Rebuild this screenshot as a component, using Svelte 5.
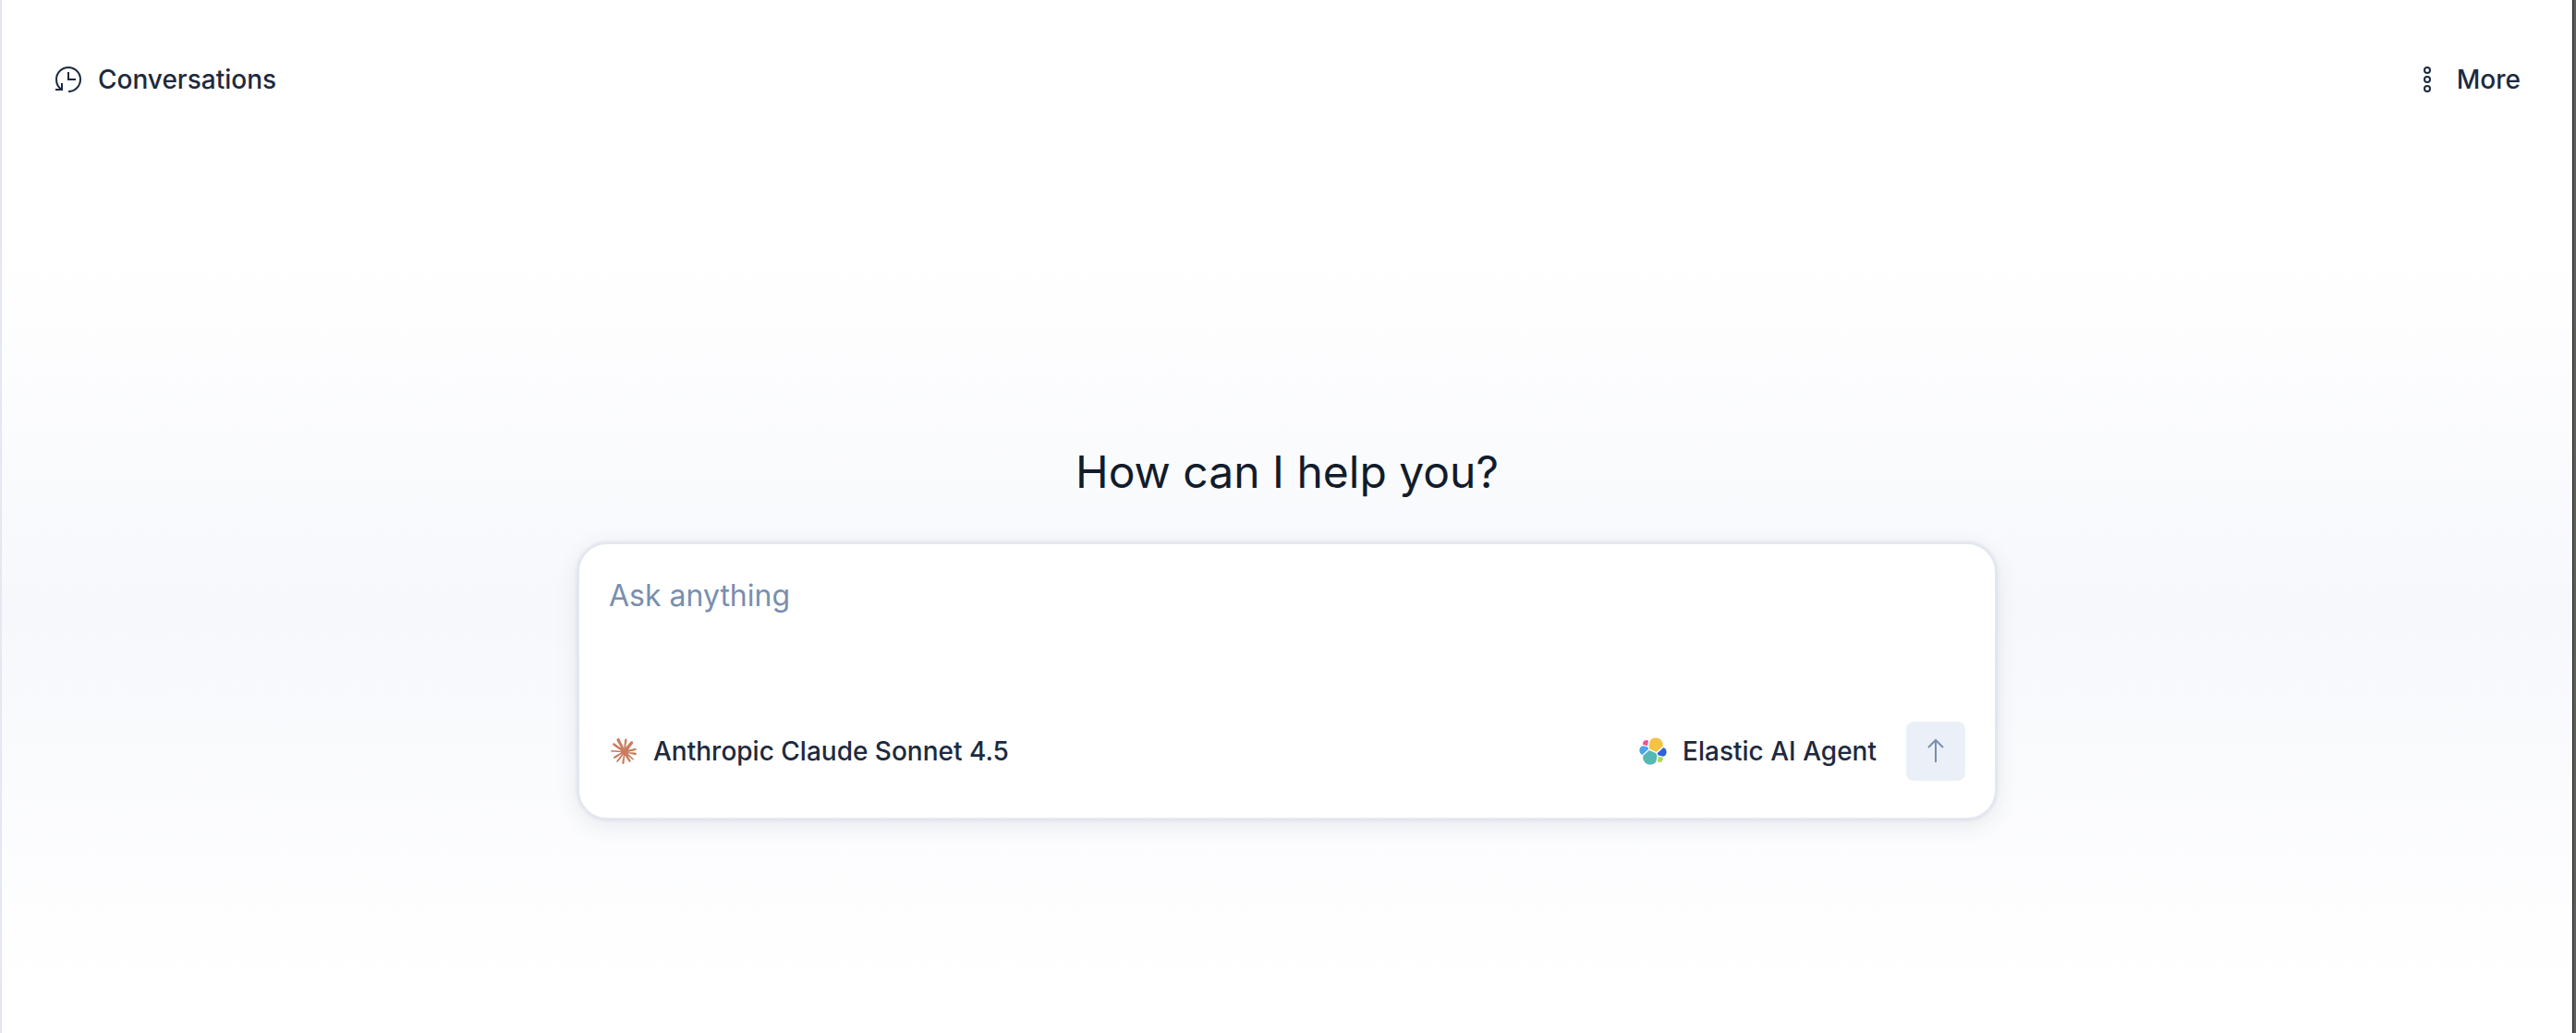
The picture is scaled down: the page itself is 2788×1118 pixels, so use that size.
<script>
	let message = '';

	$: canSend = message.trim().length > 0;

	function send() {
		message = '';
	}
</script>

<div class="page">
	<header>
		<button type="button" class="text-btn">
			<svg class="icon" viewBox="0 0 32 32" fill="none" stroke="currentColor" stroke-width="2">
				<path d="M16 29a13 13 0 1 0-13-13c0 4.600 2 8.400 5.500 10.800" />
				<path d="M2 27h7v-7M16 8v8h8" />
			</svg>
			Conversations
		</button>
		<button type="button" class="text-btn">
			<svg class="icon" viewBox="0 0 32 32" fill="none" stroke="currentColor" stroke-width="2">
				<circle cx="16" cy="6" r="3" />
				<circle cx="16" cy="16" r="3" />
				<circle cx="16" cy="26" r="3" />
			</svg>
			More
		</button>
	</header>

	<main>
		<h1>How can I help you?</h1>
		<form class="card" on:submit|preventDefault="{send}">
			<textarea aria-label="Message" placeholder="Ask anything" bind:value="{message}"></textarea>
			<div class="actions">
				<button type="button" class="text-btn">
					<svg class="icon claude" viewBox="0 0 24 24">
						<path d="m4.7144 15.9555 4.7174-2.6471.079-.2307-.079-.1275h-.2307l-.7893-.0486-2.6956-.0729-2.3375-.0971-2.2646-.1214-.5707-.1215-.5343-.7042.0546-.3522.4797-.3218.686.0608 1.5179.1032 2.2767.1578 1.6514.0972 2.4468.255h.3886l.0546-.1579-.1336-.0971-.1032-.0972L6.973 9.8356l-2.55-1.6879-1.3356-.9714-.7225-.4918-.3643-.4614-.1578-1.0078.6557-.7225.8803.0607.2246.0607.8925.686 1.9064 1.4754 2.4893 1.8336.3643.3035.1457-.1032.0182-.0728-.164-.2733-1.3539-2.4467-1.445-2.4893-.6435-1.032-.17-.6194c-.0607-.255-.1032-.4674-.1032-.7285L6.287.1335 6.6997 0l.9957.1336.419.3642.6192 1.4147 1.0018 2.2282 1.5543 3.0296.4553.8985.2429.8318.091.255h.1579v-.1457l.1275-1.706.2368-2.0947.2307-2.6957.0789-.7589.3764-.9107.7468-.4918.5828.2793.4797.686-.0668.4433-.2853 1.8517-.5586 2.9021-.3643 1.9429h.2125l.2429-.2429.9835-1.3053 1.6514-2.0643.7286-.8196.85-.9046.5464-.4311h1.0321l.759 1.1293-.34 1.1657-1.0625 1.3478-.8804 1.1414-1.2628 1.7-.7893 1.36.0729.1093.1882-.0183 2.8535-.607 1.5421-.2794 1.8396-.3157.8318.3886.091.3946-.3278.8075-1.967.4857-2.3072.4614-3.4364.8136-.0425.0304.0486.0607 1.5482.1457.6618.0364h1.621l3.0175.2247.7892.522.4736.6376-.079.4857-1.2142.6193-1.6393-.3886-3.825-.9107-1.3113-.3279h-.1822v.1093l1.0929 1.0686 2.0035 1.8092 2.5075 2.3314.1275.5768-.3218.4554-.34-.0486-2.2039-1.6575-.85-.7468-1.9246-1.621h-.1275v.17l.4432.6496 2.3436 3.5214.1214 1.0807-.17.3521-.6071.2125-.6679-.1214-1.3721-1.9246L14.38 17.959l-1.1414-1.9428-.1397.079-.674 7.2552-.3156.3703-.7286.2793-.6071-.4614-.3218-.7468.3218-1.4753.3886-1.9246.3157-1.53.2853-1.9004.17-.6314-.0121-.0425-.1397.0182-1.4328 1.9672-2.1796 2.9446-1.7243 1.8456-.4128.164-.7164-.3704.0667-.6618.4008-.5889 2.386-3.0357 1.4389-1.882.929-1.0868-.0062-.1579h-.0546l-6.3385 4.1164-1.1293.1457-.4857-.4554.0608-.7467.2307-.2429 1.9064-1.3114Z" />
					</svg>
					Anthropic Claude Sonnet 4.5
				</button>
				<div class="right">
					<button type="button" class="text-btn">
						<svg class="icon" viewBox="0 0 32 32">
							<path fill="#f4c344" d="M12.580 13.787l7.002 3.211 7.066-6.213a7.850 7.850 0 0 0 .152-1.557c0-4.287-3.470-7.765-7.745-7.765a7.720 7.720 0 0 0-6.408 3.428l-1.176 6.124z" />
							<path fill="#54b8b4" d="M5.900 20.300a7.990 7.990 0 0 0-.717 2.497c0 4.302 3.482 7.816 7.767 7.816 2.580 0 4.980-1.284 6.430-3.428l1.162-6.103-1.549-2.984-7.028-3.219z" />
							<path fill="#e4579b" d="M5.288 9.067l4.800 1.137L11.140 4.720a3.813 3.813 0 0 0-5.852 4.347z" />
							<path fill="#4ba4ee" d="M4.871 10.214a5.309 5.309 0 0 0-3.526 5.027c0 2.086 1.287 3.948 3.210 4.690l6.733-6.127-1.236-2.659z" />
							<path fill="#a8dc50" d="M20.873 27.177a3.813 3.813 0 0 0 5.851-4.347l-4.787-1.136z" />
							<path fill="#2e62d9" d="M21.848 20.563l5.270 1.241a5.330 5.330 0 0 0 3.533-5.032c0-2.078-1.290-3.934-3.218-4.676l-6.892 6.072z" />
						</svg>
						Elastic AI Agent
					</button>
					<button type="submit" class="send" aria-label="Send" disabled="{!canSend}">
						<svg class="icon" viewBox="0 0 32 32" fill="none" stroke="currentColor" stroke-width="2">
							<path d="M16 28V4M8 12l8-8 8 8" />
						</svg>
					</button>
				</div>
			</div>
		</form>
	</main>
</div>

<style>
	:global(body) {
		margin: 0;
	}
	.page {
		box-sizing: border-box;
		min-height: 100vh;
		padding-right: 1px;
		border-left: 2px solid #e3e7f2;
		border-right: 3px solid #5f5e5a;
		background: linear-gradient(#fff 24%, #f7f8fc 59%, #fff 96%);
		box-shadow: inset -1px 0 #1c1c1c;
		color: #1d2a3e;
		font-family: Inter, sans-serif;
	}
	header {
		display: flex;
		justify-content: space-between;
		padding: 54px 56px 0;
	}
	button {
		padding: 0;
		border: 0;
		background: none;
		color: inherit;
		font: inherit;
		cursor: pointer;
	}
	.text-btn {
		display: flex;
		align-items: center;
		gap: 16px;
		height: 64px;
		font-size: 28px;
		font-weight: 500;
	}
	.icon {
		width: 32px;
		height: 32px;
	}
	.claude {
		box-sizing: border-box;
		padding: 2px;
		fill: #ca7c5e;
	}
	main {
		display: flex;
		flex-direction: column;
		align-items: center;
		padding: 361px 32px 64px;
	}
	h1 {
		margin: 0 0 44px;
		color: #111c2c;
		font-size: 48px;
		font-weight: 400;
		line-height: 64px;
	}
	.card {
		box-sizing: border-box;
		display: flex;
		flex-direction: column;
		width: 100%;
		max-width: 1536px;
		min-height: 300px;
		padding: 32px 32px 40px;
		border: 2px solid #e3e7f2;
		border-radius: 32px;
		background: #fff;
		box-shadow: 0 0 4px rgba(43, 57, 79, 0.12), 0 6px 24px rgba(43, 57, 79, 0.1);
	}
	textarea {
		flex: 1;
		padding: 0;
		border: 0;
		outline: 0;
		resize: none;
		background: none;
		color: inherit;
		font-family: inherit;
		font-size: 32px;
		line-height: 48px;
	}
	textarea::placeholder {
		color: #798eaf;
	}
	.actions {
		display: flex;
		justify-content: space-between;
	}
	.right {
		display: flex;
		gap: 32px;
	}
	.send {
		display: grid;
		place-items: center;
		width: 64px;
		height: 64px;
		border-radius: 8px;
		background: #ebf0f8;
		color: #798eaf;
	}
</style>
